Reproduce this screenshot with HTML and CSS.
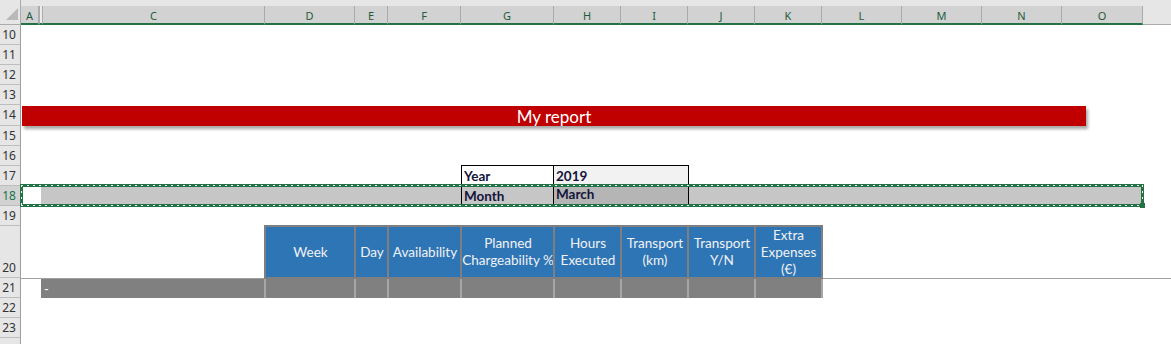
FILE: index.html
```html
<!DOCTYPE html>
<html>
<head>
<meta charset="utf-8">
<title>My report</title>
<link rel="stylesheet" href="styles.css">
</head>
<body>
<div class="sheet">
  <div class="corner">
    <svg width="20" height="24" viewBox="0 0 20 24"><polygon points="6,20 18,20 18,8" fill="#b9b9b9"/></svg>
  </div>
  <div class="topstrip"></div>

  <div class="colh">A</div>
  <div class="colh hidden"></div>
  <div class="colh">C</div>
  <div class="colh">D</div>
  <div class="colh">E</div>
  <div class="colh">F</div>
  <div class="colh">G</div>
  <div class="colh">H</div>
  <div class="colh">I</div>
  <div class="colh">J</div>
  <div class="colh">K</div>
  <div class="colh">L</div>
  <div class="colh">M</div>
  <div class="colh">N</div>
  <div class="colh">O</div>
  <div class="colh rest"></div>

  <div class="rowh r10">10</div>
  <div class="rowh r11">11</div>
  <div class="rowh r12">12</div>
  <div class="rowh r13">13</div>
  <div class="rowh r14">14</div>
  <div class="rowh r15">15</div>
  <div class="rowh r16">16</div>
  <div class="rowh r17">17</div>
  <div class="rowh r18 selected">18</div>
  <div class="rowh r19">19</div>
  <div class="rowh r20 tall">20</div>
  <div class="rowh r21">21</div>
  <div class="rowh r22">22</div>
  <div class="rowh r23">23</div>
  <div class="rowh r24"></div>

  <div class="banner r14">My report</div>

  <div class="selfill r18"><div class="active"></div></div>

  <div class="ym">
    <div class="lbl">Year</div>
    <div class="val v2019">2019</div>
    <div class="lbl">Month</div>
    <div class="val vmarch">March</div>
  </div>

  <div class="ants r18"></div>

  <div class="freeze r21"></div>

  <div class="th cD">Week</div>
  <div class="th cE">Day</div>
  <div class="th cF">Availability</div>
  <div class="th cG">Planned<br>Chargeability %</div>
  <div class="th cH">Hours<br>Executed</div>
  <div class="th cI">Transport<br>(km)</div>
  <div class="th cJ">Transport<br>Y/N</div>
  <div class="th cK last">Extra<br>Expenses<br>(€)</div>

  <div class="td first cC">-</div>
  <div class="td cD"></div>
  <div class="td cE"></div>
  <div class="td cF"></div>
  <div class="td cG"></div>
  <div class="td cH"></div>
  <div class="td cI"></div>
  <div class="td cJ"></div>
  <div class="td cK last"></div>
</div>
</body>
</html>
```

FILE: styles.css
```css
* { box-sizing: border-box; }

body {
  margin: 0;
  background: #fff;
  font-family: Lato, "Liberation Sans", sans-serif;
}

.sheet {
  display: grid;
  grid-template-columns: 21px 18px 4px 222px 90px 33px 73px 93px 67px 67px 67px 67px 80px 80px 80px 81px 1fr;
  grid-template-rows: 6px 19px 20px 20px 20px 20px 21px 20px 20px 20px 20px 20px 52px 20px 20px 20px 20px;
  width: 1171px;
  height: 344px;
  overflow: hidden;
}

/* row placement */
.r10 { grid-row: 3; }
.r11 { grid-row: 4; }
.r12 { grid-row: 5; }
.r13 { grid-row: 6; }
.r14 { grid-row: 7; }
.r15 { grid-row: 8; }
.r16 { grid-row: 9; }
.r17 { grid-row: 10; }
.r18 { grid-row: 11; }
.r19 { grid-row: 12; }
.r20 { grid-row: 13; }
.r21 { grid-row: 14; }
.r22 { grid-row: 15; }
.r23 { grid-row: 16; }
.r24 { grid-row: 17; }

/* column placement */
.cC { grid-column: 4; }
.cD { grid-column: 5; }
.cE { grid-column: 6; }
.cF { grid-column: 7; }
.cG { grid-column: 8; }
.cH { grid-column: 9; }
.cI { grid-column: 10; }
.cJ { grid-column: 11; }
.cK { grid-column: 12; }

/* headers */
.corner {
  grid-row: 1 / 3;
  grid-column: 1;
  background: #e6e6e6;
  border-right: 1px solid #ababab;
  border-bottom: 1px solid #ababab;
}
.corner svg { display: block; }

.topstrip {
  grid-row: 1;
  grid-column: 2 / -1;
  background: #e6e6e6;
}

.colh {
  grid-row: 2;
  background: #d2d2d2;
  border-right: 1px solid #ababab;
  border-bottom: 2px solid #217346;
  font-family: "Noto Sans", "Open Sans", sans-serif;
  font-size: 11px;
  color: #1f5b40;
  display: flex;
  align-items: center;
  justify-content: center;
  padding-top: 1px;
}
.colh.hidden {
  background: #ececec;
  border-left: 1px solid #ababab;
}
.colh.rest {
  background: #e6e6e6;
  border-right: 0;
  border-bottom: 1px solid #ababab;
}

.rowh {
  grid-column: 1;
  background: #e6e6e6;
  border-right: 1px solid #9e9e9e;
  border-bottom: 1px solid #bdbdbd;
  font-family: "Noto Sans", "Open Sans", sans-serif;
  font-size: 12px;
  line-height: 14px;
  color: #333;
  display: flex;
  align-items: center;
  justify-content: center;
  padding-right: 2px;
}
.rowh.selected {
  background: #d2d2d2;
  color: #217346;
}
.rowh.tall {
  align-items: flex-end;
  padding-bottom: 2px;
}

/* banner */
.banner {
  grid-column: 2 / 17;
  margin: 1px 57px 0 1px;
  background: #c00000;
  color: #fff;
  font-size: 17px;
  display: flex;
  align-items: center;
  justify-content: center;
  box-shadow: 2px 3px 3px rgba(0, 0, 0, 0.35);
}

/* row 18 selection */
.selfill {
  grid-column: 2 / 17;
  background: #c6c6c6;
  display: flex;
}
.active {
  width: 20px;
  background: #fff;
}

.ants {
  grid-column: 2 / 17;
  margin: -2px -1px -1px -1px;
  border: 3px solid #217346;
  position: relative;
}
.ants::after {
  content: "";
  position: absolute;
  inset: -2px;
  background:
    repeating-linear-gradient(90deg, #fff 0 2px, transparent 2px 6px) left top / 100% 1px no-repeat,
    repeating-linear-gradient(90deg, #fff 0 2px, transparent 2px 6px) left bottom / 100% 1px no-repeat,
    repeating-linear-gradient(180deg, #fff 0 2px, transparent 2px 6px) left top / 1px 100% no-repeat,
    repeating-linear-gradient(180deg, #fff 0 2px, transparent 2px 6px) right top / 1px 100% no-repeat;
}
.ants::before {
  content: "";
  position: absolute;
  right: -4px;
  bottom: -4px;
  width: 5px;
  height: 5px;
  background: #217346;
  z-index: 1;
}

/* year / month box */
.ym {
  grid-row: 10 / 12;
  grid-column: 8 / 11;
  margin: -1px -1px 0 0;
  border: 1px solid #000;
  display: grid;
  grid-template-columns: 92px 1fr;
  grid-template-rows: 19px 1fr;
  font-weight: 700;
  font-size: 13.5px;
  color: #14143a;
}
.lbl, .val {
  display: flex;
  align-items: flex-end;
  padding: 0 2px 1px 2px;
  line-height: 16px;
}
.lbl { border-right: 1px solid #000; }
.v2019 { background: #f2f2f2; }
.vmarch { background: #b5b5b5; padding-bottom: 3px; }

/* freeze line */
.freeze {
  grid-column: 2 / -1;
  align-self: start;
  border-top: 1px solid #a0a0a0;
}

/* table header */
.th {
  grid-row: 13;
  margin: -1px 0 -1px -1px;
  background: #2e75b6;
  border: 2px solid #7f7f7f;
  border-right: 0;
  color: #f2f2f2;
  font-size: 13.5px;
  line-height: 17px;
  display: flex;
  align-items: center;
  justify-content: center;
  text-align: center;
  white-space: nowrap;
}
.th.last {
  border-right: 2px solid #7f7f7f;
  margin-right: -1px;
}

/* row 21 */
.td {
  grid-row: 14;
  margin: 1px 0 0 -1px;
  background: #808080;
  border-left: 2px solid #a6a6a6;
}
.td.first {
  margin-left: -2px;
  border-left: 0;
  color: #fff;
  font-size: 13px;
  display: flex;
  align-items: center;
  padding-left: 3px;
}
.td.last {
  border-right: 2px solid #a6a6a6;
  margin-right: -1px;
}
```
